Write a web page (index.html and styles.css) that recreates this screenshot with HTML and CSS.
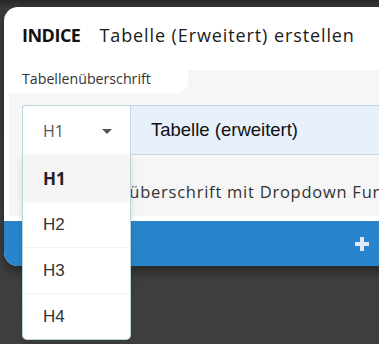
FILE: index.html
```html
<!DOCTYPE html>
<html lang="de">
<head>
<meta charset="utf-8">
<link rel="stylesheet" href="styles.css">
</head>
<body>
<div class="modal">
  <div class="modal-head">
    <span class="brand">INDICE</span>
    <span class="title">Tabelle (Erweitert) erstellen</span>
  </div>
  <div class="panel">
    <div class="tab">Tabellenüberschrift</div>
    <div class="row">
      <div class="select">
        <span class="sel-value">H1</span>
        <span class="caret"></span>
        <ul class="menu">
          <li class="opt active">H1</li>
          <li class="opt">H2</li>
          <li class="opt">H3</li>
          <li class="opt">H4</li>
        </ul>
      </div>
      <div class="input">Tabelle (erweitert)</div>
    </div>
    <div class="hint">Tabellenüberschrift mit Dropdown Funktion</div>
  </div>
  <div class="footer">
    <svg class="plus" width="14" height="14" viewBox="0 0 14 14"><path d="M5 0h4v5h5v4H9v5H5V9H0V5h5z" fill="#dcebf7"/></svg>
  </div>
</div>
</body>
</html>
```
FILE: styles.css
```css
html, body { margin: 0; padding: 0; }
body {
  width: 379px;
  height: 344px;
  overflow: hidden;
  background: linear-gradient(#262626 0, #3a3a3a 8px, #3f3f3f 100%);
  padding: 7px 0 0 4px;
  box-sizing: border-box;
  font-family: "Open Sans", "Noto Sans", sans-serif;
  color: #222;
}
.modal {
  width: 440px;
  background: #fff;
  border-radius: 14px;
  box-shadow: 0 6px 8px rgba(0,0,0,0.35);
}
.modal-head {
  height: 63px;
  display: flex;
  align-items: center;
  padding-left: 18px;
  gap: 19px;
  font-size: 18px;
  box-sizing: border-box;
  padding-bottom: 8px;
}
.brand { font-weight: 700; letter-spacing: -0.5px; color: #111; }
.title { color: #1a1a1a; letter-spacing: 0.9px; }
.panel {
  margin-left: 5px;
  background: #f6f6f6;
  height: 146px;
  display: flex;
  flex-direction: column;
}
.tab {
  align-self: flex-start;
  background: #fff;
  height: 23px;
  width: 179px;
  box-sizing: border-box;
  padding-left: 13px;
  font-size: 14.2px;
  line-height: 17px;
  color: #333;
  border-bottom-right-radius: 11px;
}
.row {
  display: flex;
  margin: 12px 0 0 13px;
  height: 50px;
}
.select {
  position: relative;
  width: 108px;
  box-sizing: border-box;
  background: #fff;
  border: 1px solid #bcd3dc;
  border-right: none;
  border-bottom: none;
  border-top-left-radius: 4px;
  display: flex;
  align-items: center;
  padding-left: 20px;
  font-size: 16px;
  color: #555;
}
.caret {
  position: absolute;
  left: 79px;
  top: 23px;
  border-left: 5px solid transparent;
  border-right: 5px solid transparent;
  border-top: 5px solid #555;
}
.menu {
  position: absolute;
  top: 49px;
  left: -1px;
  width: 109px;
  margin: 0;
  padding: 0;
  list-style: none;
  background: #fff;
  border: 1px solid #bcd3dc;
  border-top: none;
  border-radius: 0 0 5px 5px;
  box-sizing: border-box;
  overflow: hidden;
  box-shadow: 0 3px 6px rgba(0,0,0,0.12);
  z-index: 2;
}
.opt {
  height: 46px;
  display: flex;
  align-items: center;
  padding-left: 20px;
  font-family: "Liberation Sans", Arial, sans-serif;
  font-size: 17px;
  color: #333;
  border-top: 1px solid #f1f1f1;
  box-sizing: border-box;
}
.opt:first-child { border-top: none; }
.opt.active {
  background: #f5f5f5;
  font-family: "Open Sans", sans-serif;
  font-weight: 700;
  color: #222;
}
.input {
  flex: 1;
  background: #e8f0fb;
  border: 1px solid #c6d7e6;
  display: flex;
  align-items: center;
  padding-left: 20px;
  font-family: "Liberation Sans", Arial, sans-serif;
  font-size: 18.5px;
  color: #111;
}
.hint {
  margin: 25px 0 0 0;
  padding-left: 49px;
  font-size: 16.5px;
  letter-spacing: 0.75px;
  color: #333;
  white-space: nowrap;
}
.footer {
  margin-top: 5px;
  height: 45px;
  background: #2a84cc;
  border-radius: 0 0 0 14px;
  display: flex;
  align-items: center;
  padding-left: 351px;
}
```
